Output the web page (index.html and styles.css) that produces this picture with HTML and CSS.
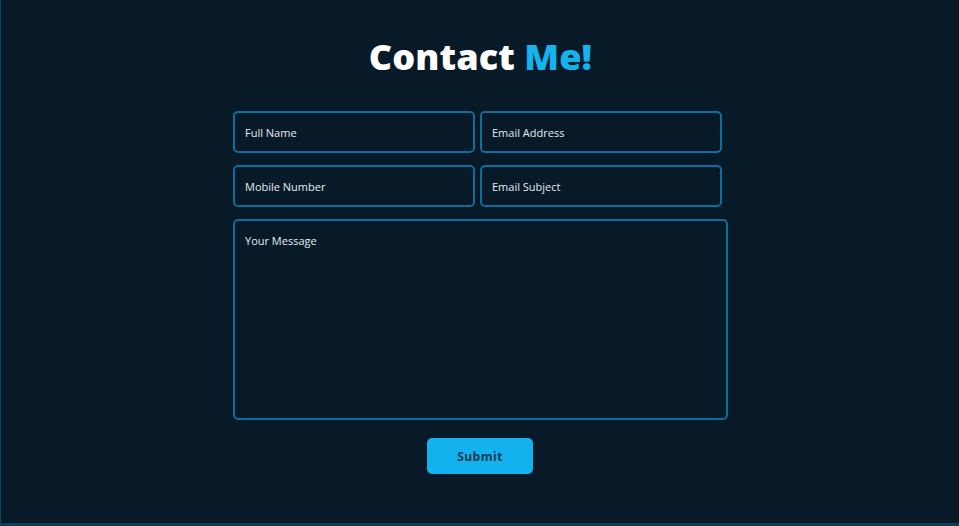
FILE: index.html
```html
<!DOCTYPE html>
<html>
<head>
<meta charset="utf-8">
<link rel="stylesheet" href="styles.css">
</head>
<body>
<section class="contact">
  <h2 class="title">Contact <span class="accent">Me!</span></h2>
  <form class="form">
    <div class="row">
      <div class="field">Full Name</div>
      <div class="field">Email Address</div>
    </div>
    <div class="row">
      <div class="field">Mobile Number</div>
      <div class="field">Email Subject</div>
    </div>
    <div class="message">Your Message</div>
    <div class="actions"><span class="btn">Submit</span></div>
  </form>
</section>
</body>
</html>
```
FILE: styles.css
```css
html, body {
  margin: 0;
  padding: 0;
  background: #081a28;
}
body {
  width: 959px;
  height: 526px;
  overflow: hidden;
  font-family: "Open Sans", "Liberation Sans", sans-serif;
}
.contact {
  box-sizing: border-box;
  height: 526px;
  border-left: 1px solid #0c4a68;
  border-bottom: 3px solid #0b3e58;
  display: flex;
  flex-direction: column;
  align-items: center;
  padding-top: 32px;
}
.title {
  margin: 0 0 0 1px;
  font-size: 36px;
  line-height: 50px;
  font-weight: 800;
  color: #ffffff;
  letter-spacing: 0.1px;
}
.accent { color: #13b3ec; }
.form {
  margin-top: 29px;
  width: 495px;
  margin-left: 1px;
  display: flex;
  flex-direction: column;
}
.row {
  display: flex;
  gap: 5px;
  margin-bottom: 12px;
}
.field, .message {
  box-sizing: border-box;
  border: 2px solid #0a6f9c;
  border-radius: 5px;
  color: #e6ecf0;
  font-size: 11px;
  padding-left: 10px;
}
.field {
  width: 242px;
  height: 42px;
  display: flex;
  align-items: center;
}
.message {
  height: 201px;
  padding-top: 12px;
}
.actions {
  display: flex;
  justify-content: center;
  margin-top: 18px;
  margin-right: 1px;
}
.btn {
  box-sizing: border-box;
  width: 106px;
  height: 36px;
  border-radius: 5px;
  background: #12b2ee;
  color: #0a3a55;
  font-size: 12px;
  font-weight: 700;
  display: flex;
  align-items: center;
  justify-content: center;
  letter-spacing: 0.5px;
}
```
